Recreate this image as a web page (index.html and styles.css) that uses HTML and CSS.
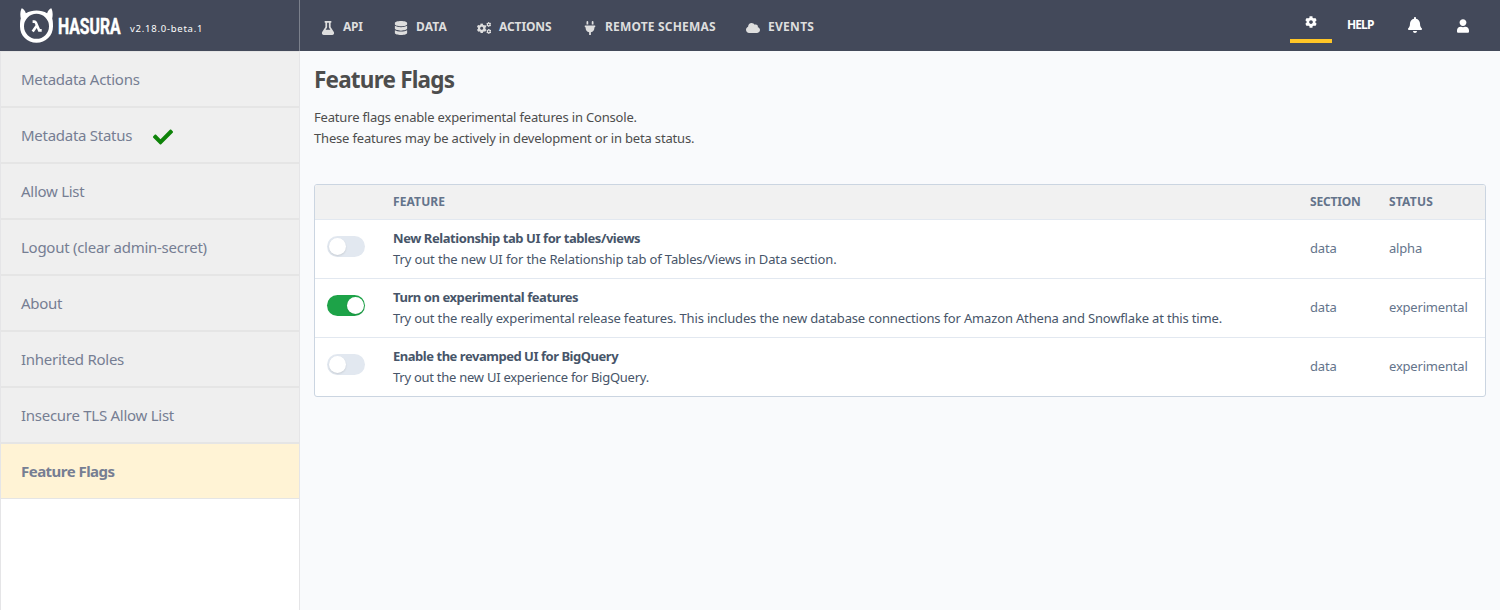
FILE: index.html
```html
<!DOCTYPE html>
<html lang="en">
<head>
<meta charset="utf-8">
<title>Feature Flags</title>
<link rel="stylesheet" href="styles.css">
</head>
<body>
<svg width="0" height="0" class="defs">
  <symbol id="cog" viewBox="0 0 512 512"><path d="M487.4 315.7l-42.6-24.6c4.3-23.2 4.3-47 0-70.2l42.6-24.6c4.9-2.8 7.1-8.6 5.5-14-11.1-35.6-30-67.8-54.7-94.6-3.8-4.1-10-5.1-14.8-2.3L380.8 110c-17.9-15.4-38.5-27.3-60.8-35.1V25.8c0-5.6-3.9-10.5-9.4-11.7-36.7-8.2-74.3-7.8-109.2 0-5.5 1.2-9.4 6.1-9.4 11.7V75c-22.2 7.9-42.8 19.8-60.8 35.1L88.7 85.5c-4.9-2.8-11-1.9-14.8 2.3-24.7 26.7-43.6 58.9-54.7 94.6-1.7 5.4.6 11.2 5.5 14L67.3 221c-4.3 23.2-4.3 47 0 70.2l-42.6 24.6c-4.9 2.8-7.1 8.6-5.5 14 11.1 35.6 30 67.8 54.7 94.6 3.8 4.1 10 5.1 14.8 2.3l42.6-24.6c17.9 15.4 38.5 27.3 60.8 35.1v49.2c0 5.6 3.9 10.5 9.4 11.7 36.7 8.2 74.3 7.8 109.2 0 5.5-1.2 9.4-6.1 9.4-11.7v-49.2c22.2-7.9 42.8-19.8 60.8-35.1l42.6 24.6c4.9 2.8 11 1.9 14.8-2.3 24.7-26.7 43.6-58.9 54.7-94.6 1.5-5.5-.7-11.3-5.6-14.1zM256 336c-44.1 0-80-35.9-80-80s35.9-80 80-80 80 35.9 80 80-35.9 80-80 80z"/></symbol>
</svg>
<header class="header">
  <div class="brand">
    <svg class="logo" width="33" height="36" viewBox="0 0 33 36">
      <path fill="#fff" fill-rule="evenodd" d="M1.6.4C2.3-.2 5 2.300 5.900 5.300C9 3.300 12.600 2.400 16.500 2.400S24 3.300 27.100 5.300C28 2.300 30.700-.2 31.400.4C32.800 3 33 7.400 32.200 10.600C32.800 12.500 33 14.500 33 18.500C33 27.800 25.700 34.700 16.500 34.700S0 27.800 0 18.500C0 14.500.2 12.500.8 10.600C0 7.400.2 3 1.600.4ZM16.500 5.800A12.500 12.500 0 1 0 16.500 30.800A12.500 12.500 0 1 0 16.500 5.800Z"/>
      <path fill="none" stroke="#fff" stroke-width="2.600" d="M12.600 13.600H14.300Q15.400 13.600 15.900 14.700L19.200 22.400H21.700M16.900 17.500L12.700 23.500"/>
    </svg>
    <span class="wordmark">HASURA</span>
    <span class="version">v2.18.0-beta.1</span>
  </div>
  <nav class="nav">
    <a class="nav-item"><svg class="ic" viewBox="0 0 448 512"><path d="M437.200 403.500L320 215V64h8c13.300 0 24-10.700 24-24V24c0-13.300-10.700-24-24-24H120c-13.300 0-24 10.700-24 24v16c0 13.300 10.700 24 24 24h8v151L10.800 403.500C-18.500 450.600 15.300 512 70.900 512h306.200c55.700 0 89.400-61.500 60.100-108.500zM137.900 320h172.200l-48.200-77.600c-3.700-5.200-5.900-11.600-5.900-18.400V64h-64v160c0 6.800-2.200 13.200-5.900 18.400z" fill-rule="evenodd"/></svg><span class="api">API</span></a>
    <a class="nav-item"><svg class="ic" viewBox="0 0 448 512"><path d="M448 73.143v45.714C448 159.143 347.667 192 224 192S0 159.143 0 118.857V73.143C0 32.857 100.333 0 224 0s224 32.857 224 73.143zM448 176v102.857C448 319.143 347.667 352 224 352S0 319.143 0 278.857V176c48.125 33.143 136.208 48.572 224 48.572S399.874 209.143 448 176zm0 160v102.857C448 479.143 347.667 512 224 512S0 479.143 0 438.857V336c48.125 33.143 136.208 48.572 224 48.572S399.874 369.143 448 336z"/></svg><span class="dat">DATA</span></a>
    <a class="nav-item"><svg class="ic" viewBox="0 0 14 14"><use href="#cog" x="-.3" y="2.300" width="10" height="10"/><use href="#cog" x="9.200" y="1" width="5" height="5"/><use href="#cog" x="9.200" y="7.800" width="5.200" height="5.200"/></svg><span class="act">ACTIONS</span></a>
    <a class="nav-item"><svg class="ic" viewBox="0 0 384 512"><path d="M320 32a32 32 0 0 0-64 0v96h64zm48 128H16A16 16 0 0 0 0 176v32a16 16 0 0 0 16 16h16v32a160.070 160.070 0 0 0 128 156.800V512h64v-99.200A160.070 160.070 0 0 0 352 256v-32h16a16 16 0 0 0 16-16v-32a16 16 0 0 0-16-16zM128 32a32 32 0 0 0-64 0v96h64z"/></svg><span class="rem">REMOTE SCHEMAS</span></a>
    <a class="nav-item"><svg class="ic" viewBox="0 0 640 512"><path d="M537.600 226.600c4.100-10.700 6.400-22.400 6.400-34.600 0-53-43-96-96-96-19.700 0-38.100 6-53.300 16.200C367 64.200 315.300 32 256 32c-88.400 0-160 71.600-160 160 0 2.700.1 5.400.2 8.100C40.200 219.800 0 273.200 0 336c0 79.500 64.500 144 144 144h368c70.700 0 128-57.300 128-128 0-61.900-44-113.600-102.400-125.400z"/></svg><span class="eve">EVENTS</span></a>
  </nav>
  <div class="tools">
    <a class="settings"><svg width="12" height="12"><use href="#cog"/></svg></a>
    <a class="help">HELP</a>
    <svg class="bell" width="14" height="16" viewBox="0 0 448 512"><path d="M224 512c35.320 0 63.970-28.650 63.970-64H160.030c0 35.350 28.650 64 63.970 64zm215.390-149.710c-19.320-20.760-55.470-51.990-55.470-154.290 0-77.700-54.480-139.900-127.940-155.160V32c0-17.670-14.320-32-31.980-32s-31.980 14.330-31.980 32v20.840C118.560 68.100 64.080 130.300 64.080 208c0 102.300-36.150 133.530-55.470 154.290-6 6.450-8.660 14.160-8.610 21.710.11 16.400 12.980 32 32.100 32h383.800c19.120 0 32-15.600 32.100-32 .05-7.550-2.610-15.270-8.610-21.710z"/></svg>
    <svg class="user" width="12" height="14" viewBox="0 0 448 512"><path d="M224 256c70.700 0 128-57.300 128-128S294.700 0 224 0 96 57.300 96 128s57.300 128 128 128zm89.600 32h-16.700c-22.200 10.200-46.900 16-72.900 16s-50.600-5.800-72.900-16h-16.700C60.200 288 0 348.200 0 422.400V464c0 26.500 21.500 48 48 48h352c26.500 0 48-21.500 48-48v-41.600c0-74.200-60.200-134.400-134.400-134.400z"/></svg>
  </div>
</header>
<div class="body">
  <aside class="sidebar">
    <a class="side-item">Metadata Actions</a>
    <a class="side-item">Metadata Status<svg class="check" width="20" height="20" viewBox="0 0 512 512"><path d="M173.898 439.404l-166.400-166.400c-9.997-9.997-9.997-26.206 0-36.204l36.203-36.204c9.997-9.998 26.207-9.998 36.204 0L192 312.690 432.095 72.596c9.997-9.997 26.207-9.997 36.204 0l36.203 36.204c9.997 9.997 9.997 26.206 0 36.204l-294.400 294.401c-9.998 9.997-26.207 9.997-36.204-.001z"/></svg></a>
    <a class="side-item">Allow List</a>
    <a class="side-item">Logout (clear admin-secret)</a>
    <a class="side-item">About</a>
    <a class="side-item">Inherited Roles</a>
    <a class="side-item">Insecure TLS Allow List</a>
    <a class="side-item active">Feature Flags</a>
  </aside>
  <main class="main">
    <h1 class="title">Feature Flags</h1>
    <p class="intro">Feature flags enable experimental features in Console.<br>These features may be actively in development or in beta status.</p>
    <div class="table">
      <div class="row head"><span></span><span class="h-feature">FEATURE</span><span class="h-section">SECTION</span><span class="h-status">STATUS</span></div>
      <div class="row">
        <span class="toggle"></span>
        <div class="feature"><b>New Relationship tab UI for tables/views</b><p class="d1">Try out the new UI for the Relationship tab of Tables/Views in Data section.</p></div>
        <span class="cell">data</span><span class="cell">alpha</span>
      </div>
      <div class="row">
        <span class="toggle on"></span>
        <div class="feature"><b>Turn on experimental features</b><p class="d2">Try out the really experimental release features. This includes the new database connections for Amazon Athena and Snowflake at this time.</p></div>
        <span class="cell">data</span><span class="cell">experimental</span>
      </div>
      <div class="row">
        <span class="toggle"></span>
        <div class="feature"><b class="b3">Enable the revamped UI for BigQuery</b><p class="d3">Try out the new UI experience for BigQuery.</p></div>
        <span class="cell">data</span><span class="cell">experimental</span>
      </div>
    </div>
  </main>
</div>
</body>
</html>
```
FILE: styles.css
```css
* { box-sizing: border-box; }
body { margin: 0; height: 610px; overflow: hidden; display: flex; flex-direction: column; font-family: "Noto Sans", sans-serif; background: #f9fafc; }
p, h1 { margin: 0; }
.defs { position: absolute; }

.header { height: 51px; flex: none; display: flex; background: #43495a; color: #fff; fill: #fff; white-space: nowrap; }
.brand { width: 300px; display: flex; align-items: flex-start; padding: 8px 0 0 20px; border-right: 1px solid #7b808c; }
.wordmark { width: 63px; margin: 5px 0 0 5px; font: 700 22.5px/26px Roboto, sans-serif; transform: scaleX(.7); transform-origin: 0 0; -webkit-text-stroke: .5px #fff; }
.version { font-size: 9.5px; line-height: 14px; letter-spacing: .75px; margin: 14px 0 0 9px; }
.nav { display: flex; align-items: flex-start; gap: 31px; padding: 18px 0 0 21px; color: #dedede; fill: #dedede; font-size: 12px; font-weight: 700; line-height: 18px; }
.nav-item { display: flex; align-items: center; gap: 8px; }
.ic { width: 14px; height: 14px; position: relative; top: 1px; }
.api { width: 20px; letter-spacing: -.3px; }
.dat { width: 30px; letter-spacing: .1px; }
.act { width: 53px; letter-spacing: -.1px; }
.rem { width: 110px; letter-spacing: .18px; }
.eve { letter-spacing: .29px; }
.tools { margin-left: auto; display: flex; align-items: flex-start; padding-right: 31px; }
.settings { width: 42px; height: 43px; border-bottom: 4px solid #ffc627; padding: 16px 0 0 15px; }
.settings svg { display: block; }
.help { width: 28px; margin: 16px 0 0 15px; font-size: 12px; line-height: 18px; font-weight: 700; letter-spacing: -.9px; }
.bell { margin: 17px 0 0 33px; }
.user { margin: 19px 0 0 35px; }

.body { flex: 1; display: flex; }
.sidebar { width: 300px; background: #fff; border: solid #e5e5e7; border-width: 0 1px; }
.side-item { display: flex; align-items: center; height: 56px; padding-left: 20px; border: solid #e5e5e5; border-width: 1px 0; background: #efefef; color: #767e93; font-size: 15px; letter-spacing: -.27px; }
.side-item.active { background: #fff3d5; font-weight: 700; letter-spacing: -.53px; }
.check { margin: 3px 0 0 21px; fill: #0e8309; }

.main { flex: 1; padding: 12px 14px 0; }
.title { font-size: 22.5px; line-height: 34px; letter-spacing: -.8px; color: #4d4d4d; }
.intro { margin-top: 10px; font-size: 13px; line-height: 21px; letter-spacing: -.18px; color: #4d4d4d; }
.table { margin-top: 35px; border: 1px solid #cbd5e1; border-radius: 3px; background: #fff; overflow: hidden; }
.row { display: grid; grid-template-columns: 78px 1fr 79px 96px; height: 59px; border-bottom: 1px solid #e2e8f0; }
.row:last-child { height: 58px; border-bottom: 0; }
.head { height: 35px; background: #f1f1f1; color: #64748b; font-size: 12px; line-height: 34px; font-weight: 700; }
.h-feature { letter-spacing: .11px; }
.h-section { letter-spacing: -.2px; }
.h-status { letter-spacing: .2px; }
.toggle { width: 38px; height: 21px; margin: 16px 0 0 12px; border-radius: 11px; background: #e2e8f0; padding: 2px; }
.toggle::before { content: ""; display: block; width: 17px; height: 17px; border-radius: 50%; background: #fff; box-shadow: 0 1px 2px rgba(0, 0, 0, .12); }
.toggle.on { background: #1da348; }
.toggle.on::before { margin-left: 17.500px; }
.feature { padding-top: 8px; font-size: 13px; line-height: 21px; color: #475569; }
.feature b { display: block; letter-spacing: -.43px; }
.feature .b3 { letter-spacing: -.47px; }
.d1 { letter-spacing: -.13px; }
.d2 { letter-spacing: -.165px; }
.d3 { letter-spacing: -.26px; }
.cell { font-size: 13px; line-height: 56px; letter-spacing: -.19px; color: #64748b; }
```
